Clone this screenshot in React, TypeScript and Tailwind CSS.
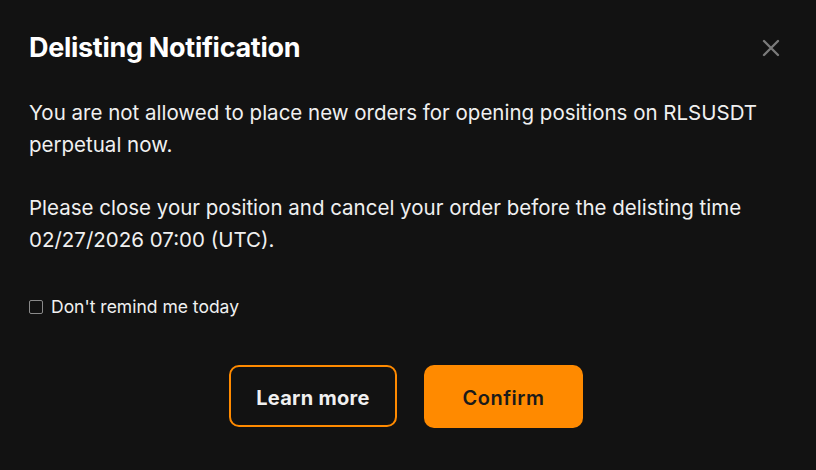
import { useState } from "react";

export default function App() {
  const [remind, setRemind] = useState(false);

  return (
    <div className="flex h-[470px] w-[816px] flex-col bg-[#121212] px-[29px] pt-[31px] font-['Inter',sans-serif] text-white">
      <div className="flex items-center justify-between">
        <h1 className="text-[27px] font-bold leading-[34px] tracking-[-0.3px]">
          Delisting Notification
        </h1>
        <button type="button" aria-label="Close" className="mr-[4px] text-[#7a7a7a]">
          <svg
            aria-hidden="true"
            viewBox="0 0 24 24"
            className="h-[24px] w-[24px]"
            fill="none"
            stroke="currentColor"
            strokeWidth={2.4}
            strokeLinecap="round"
          >
            <path d="M5 5l14 14M19 5L5 19" />
          </svg>
        </button>
      </div>

      <div className="mt-[32px] text-[20.5px] leading-[32px] text-[#f0f0f0]">
        <p>
          You are not allowed to place new orders for opening positions on RLSUSDT
          <br />
          perpetual now.
        </p>
        <p className="mt-[31px]">
          Please close your position and cancel your order before the delisting time
          <br />
          02/27/2026 07:00 (UTC).
        </p>
      </div>

      <label className="mt-[40px] flex items-center gap-[8px] text-[17.5px] leading-[22px] text-[#f0f0f0]">
        <button
          type="button"
          onClick={() => setRemind(!remind)}
          aria-pressed={remind}
          className="h-[14px] w-[14px] rounded-[2px] border border-[#8a8a8a] bg-transparent"
        />
        Don't remind me today
      </label>

      <div className="mt-[47px] flex justify-center gap-[27px] pr-[4px]">
        <button
          type="button"
          className="h-[62px] w-[168px] rounded-[10px] border-2 border-[#ff8a00] pt-[3px] text-[20px] font-bold tracking-[0.3px] text-[#f0f0f0]"
        >
          Learn more
        </button>
        <button
          type="button"
          className="h-[63px] w-[159px] rounded-[10px] bg-[#ff8a00] pt-[3px] text-[20px] font-semibold tracking-[0.5px] text-[#1a1a1a]"
        >
          Confirm
        </button>
      </div>
    </div>
  );
}
